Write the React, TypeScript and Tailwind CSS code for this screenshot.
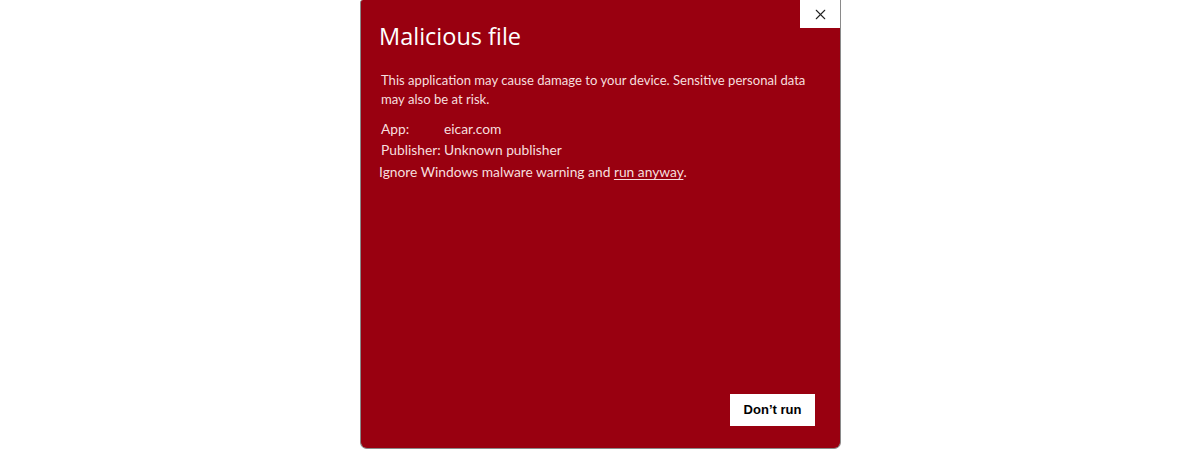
import { X } from "lucide-react";

export default function App() {
  return (
    <div className="flex h-[450px] w-[1200px] justify-center bg-white font-['Lato',sans-serif]">
      <div className="ml-[1px] flex h-[449px] w-[481px] flex-col rounded-b-[7px] rounded-tl-[3px] border border-[#8a8a8a] border-t-0 bg-[#990010]">
        <div className="flex items-start justify-between">
          <h1 className="pl-[18px] pt-[18px] font-['Open_Sans',sans-serif] text-[23.5px] leading-[36px] text-white">
            Malicious file
          </h1>
          <button className="flex h-[28px] w-[40px] items-center justify-center bg-white text-[#222]">
            <X size={17} strokeWidth={1.5} />
          </button>
        </div>
        <div className="px-[20px] pt-[17px] text-[13px] leading-[19px] text-[#f6dede]">
          <p className="text-[13.1px]">
            This application may cause damage to your device. Sensitive personal data may also be at risk.
          </p>
          <div className="mt-[10px] grid grid-cols-[63px_1fr] gap-y-[1px] text-[13.8px] leading-[20px]">
            <span>App:</span>
            <span>eicar.com</span>
            <span>Publisher:</span>
            <span>Unknown publisher</span>
          </div>
          <p className="-ml-[2px] mt-[1px] text-[13.8px] leading-[21px]">
            Ignore Windows malware warning and <span className="underline underline-offset-2">run anyway</span>.
          </p>
        </div>
        <div className="mt-auto flex justify-end pr-[25px] pb-[22px]">
          <button className="h-[32px] w-[85px] bg-white font-['Liberation_Sans',sans-serif] text-[13px] font-bold text-black">
            Don’t run
          </button>
        </div>
      </div>
    </div>
  );
}
